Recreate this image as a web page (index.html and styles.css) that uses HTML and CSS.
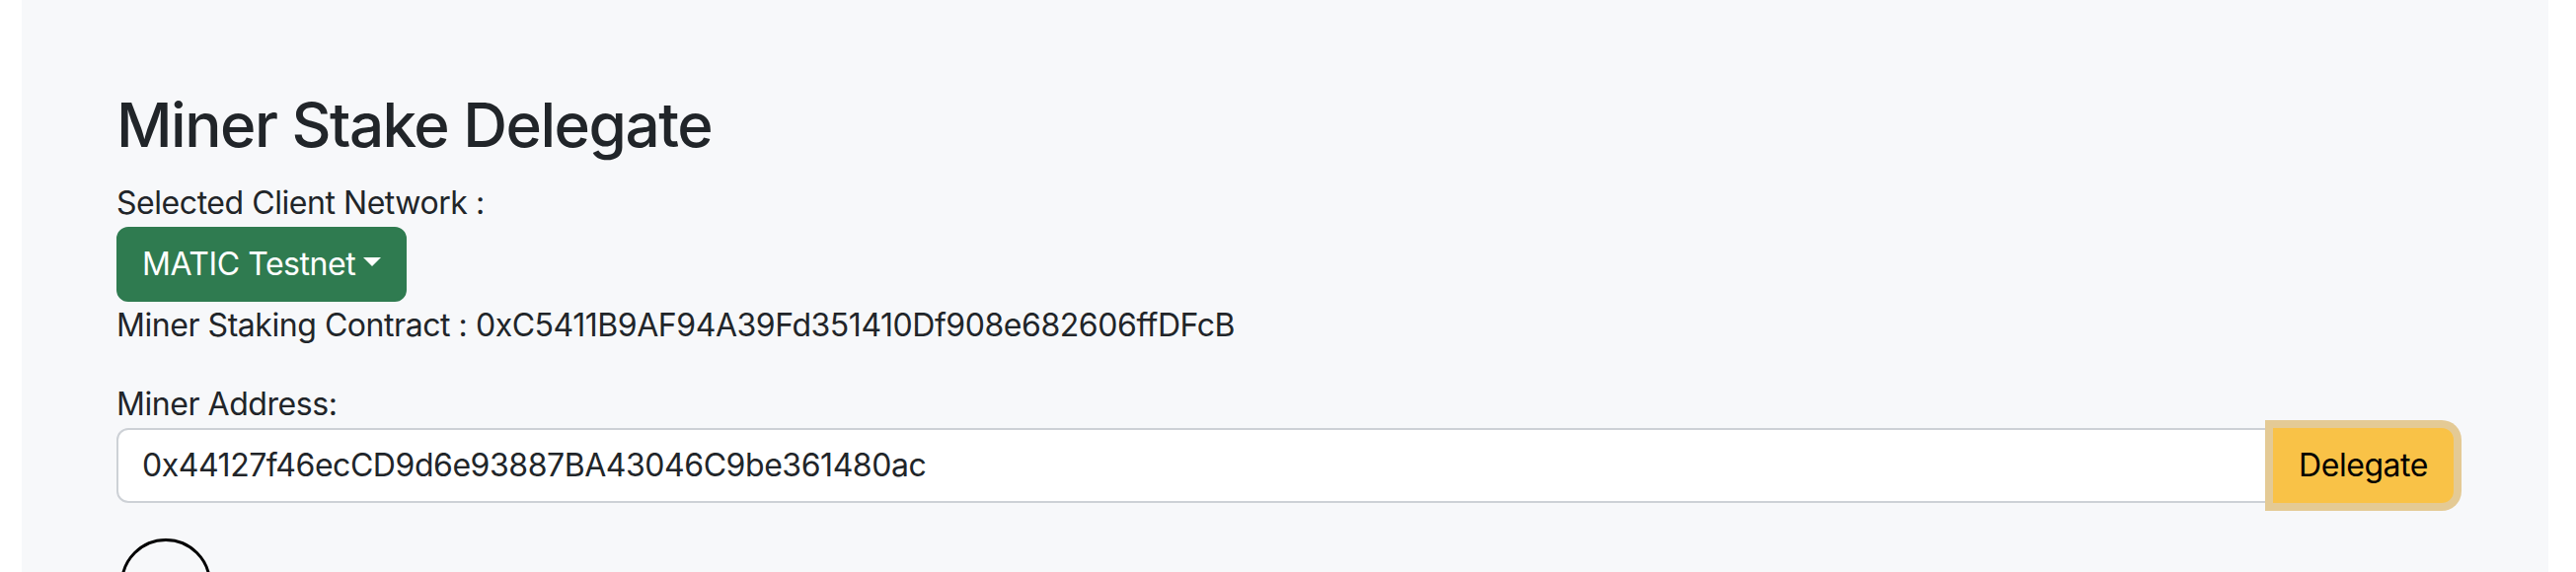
FILE: index.html
```html
<!DOCTYPE html>
<html lang="en">
<head>
<meta charset="utf-8">
<title>Miner Stake Delegate</title>
<link rel="stylesheet" href="styles.css">
</head>
<body>
  <main class="panel">
    <h2 class="title">Miner Stake Delegate</h2>
    <div class="line">Selected Client Network :</div>
    <button class="btn btn-success dropdown-toggle" type="button">MATIC Testnet</button>
    <div class="line">Miner Staking Contract : 0xC5411B9AF94A39Fd351410Df908e682606ffDFcB</div>
    <label class="line label" for="addr">Miner Address:</label>
    <div class="input-group">
      <input id="addr" class="form-control" type="text" value="0x44127f46ecCD9d6e93887BA43046C9be361480ac">
      <button class="btn btn-warning focused" type="button">Delegate</button>
    </div>
    <div class="circle"></div>
  </main>
</body>
</html>
```
FILE: styles.css
```css
html, body {
  margin: 0;
  padding: 0;
  background: #ffffff;
  height: 100%;
}
body {
  font-family: Inter, "Noto Sans", "Liberation Sans", sans-serif;
  font-size: 32px;
  line-height: 1.5;
  letter-spacing: -0.45px;
  color: #212529;
  overflow: hidden;
}
.panel {
  margin-left: 22px;
  width: 2560px;
  box-sizing: border-box;
  min-height: 100%;
  background: #f7f8fa;
  padding: 89px 96px 0 96px;
  display: flex;
  flex-direction: column;
  align-items: flex-start;
}
.title {
  font-size: 62px;
  font-weight: 500;
  line-height: 1.24;
  margin: 0 0 16px 0;
  letter-spacing: -1.5px;
}
.line {
  display: block;
  height: 48px;
}
.label {
  margin-top: 32px;
}
.btn {
  font-family: inherit;
  font-size: 32px;
  line-height: 1.5;
  letter-spacing: inherit;
  padding: 12px 24px;
  border: 2px solid transparent;
  border-radius: 12px;
  cursor: pointer;
  display: inline-flex;
  align-items: center;
}
.btn-success {
  background: #2f7b50;
  border-color: #2f7b50;
  color: #ffffff;
}
.dropdown-toggle::after {
  content: "";
  display: inline-block;
  margin-left: 8px;
  border-top: 9px solid #ffffff;
  border-left: 9px solid transparent;
  border-right: 9px solid transparent;
  position: relative;
  top: -2px;
}
.input-group {
  display: flex;
  width: 100%;
  align-items: stretch;
}
.form-control {
  flex: 1;
  font-family: inherit;
  font-size: 32px;
  line-height: 1.5;
  letter-spacing: inherit;
  color: #212529;
  background: #ffffff;
  border: 2px solid #cdd1d6;
  border-radius: 12px 0 0 12px;
  padding: 12px 24px;
  margin: 0;
  outline: none;
  min-width: 0;
}
.btn-warning {
  background: #f9c247;
  border-color: #f9c247;
  color: #000000;
  border-radius: 0 12px 12px 0;
  margin-left: -2px;
  position: relative;
  z-index: 1;
}
.focused {
  box-shadow: 0 0 0 8px #e4ca95;
}
.circle {
  margin-top: 36px;
  margin-left: 4px;
  width: 86px;
  height: 86px;
  border: 3px solid #000000;
  border-radius: 50%;
  flex: none;
}
```
